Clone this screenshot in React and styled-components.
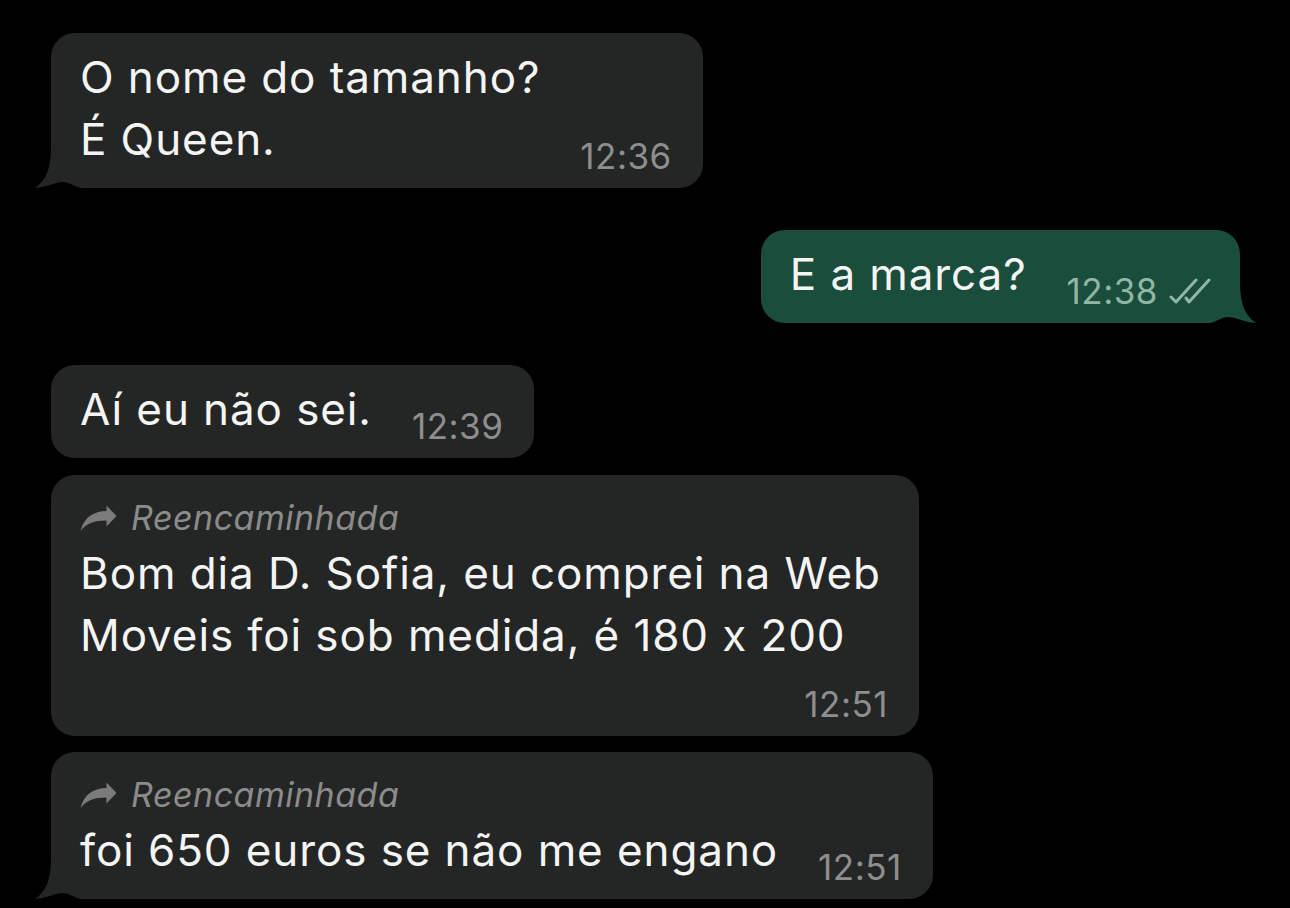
import React from 'react'
import styled, { createGlobalStyle } from 'styled-components'

const GlobalStyle = createGlobalStyle`
    html, body {
        margin: 0;
        padding: 0;
        background: #000;
    }
    body {
        font-family: Inter, "Noto Sans", "Liberation Sans", sans-serif;
        font-feature-settings: "calt" 0;
        -webkit-font-smoothing: antialiased;
    }
`

const Page = styled.div`
    width: 1290px;
    height: 908px;
    box-sizing: border-box;
    padding: 33px 50px 0 51px;
    display: flex;
    flex-direction: column;
    overflow: hidden;
`

const Bubble = styled.div`
    position: relative;
    align-self: ${props => (props.$out ? 'flex-end' : 'flex-start')};
    margin-top: ${props => props.$gap || 0}px;
    background: ${props => (props.$out ? '#1b4d3c' : '#242625')};
    border-radius: 24px;
    ${props => props.$tail && (props.$out ? 'border-bottom-right-radius: 0;' : 'border-bottom-left-radius: 0;')}
    padding: 13px ${props => (props.$out ? 28 : 31)}px 18px 29px;
    box-sizing: border-box;
    ${props => props.$width && `width: ${props.$width}px;`}
`

const Row = styled.div`
    display: flex;
    align-items: flex-end;
    gap: 40px;
`

const Text = styled.div`
    font-size: 44px;
    line-height: 62px;
    letter-spacing: 0.9px;
    color: #f4f4f4;
    white-space: pre-line;
`

const Time = styled.span`
    display: flex;
    align-items: center;
    gap: 10px;
    font-size: 35px;
    line-height: 28px;
    letter-spacing: 0.5px;
    color: ${props => (props.$out ? '#8fb6a6' : '#8e8e90')};
    white-space: nowrap;
`

const TimeRow = styled.div`
    display: flex;
    justify-content: flex-end;
    margin-top: 24px;
`

const Forwarded = styled.div`
    display: flex;
    align-items: center;
    gap: 14px;
    height: 54px;
    padding-top: 4px;
    box-sizing: border-box;
    font-size: 34px;
    letter-spacing: 0.5px;
    font-style: italic;
    color: #8b8b8c;

    svg {
        display: block;
        margin-top: 2px;
    }
`

const TailSvg = styled.svg`
    position: absolute;
    bottom: 0;
    width: 50px;
    height: 40px;
    ${props => (props.$out ? 'right: -18px; transform: scaleX(-1);' : 'left: -18px;')}
`

const Tail = ({ out }) => (
    <TailSvg $out={out} viewBox="0 0 50 40">
        <path
            d="M18 0 C18 20 13 33 2 40 C12 40 20 35 29 34 C37 34 42 39 48 40 L48 0 Z"
            fill={out ? '#1b4d3c' : '#242625'}
        />
        <path d="M2 40 C12 40 20 35 29 34 C37 34 42 39 48 40 Z" fill="#000" />
    </TailSvg>
)

const ForwardIcon = () => (
    <svg width="37" height="27" viewBox="0 0 37 27">
        <path d="M36.5 11 L26.5 0.5 L26.5 6 C14 6 4 12 0.5 26 C6 18.5 14 15.5 26.5 15.5 L26.5 21.5 Z" fill="#7b7b7c" />
    </svg>
)

const DoubleCheck = () => (
    <svg width="44" height="26" viewBox="0 0 44 26">
        <g fill="none" stroke="#8fb6a6" strokeWidth="3" strokeLinecap="round" strokeLinejoin="round">
            <path d="M3 19 L8 24 L28 2" />
            <path d="M18 20 L21 24 L41 2" />
        </g>
    </svg>
)

const App = () => (
    <>
        <GlobalStyle />
        <Page>
            <Bubble $tail>
                <Row>
                    <Text>{'O nome do tamanho?\nÉ Queen.'}</Text>
                    <Time>12:36</Time>
                </Row>
                <Tail />
            </Bubble>

            <Bubble $out $tail $gap={42}>
                <Row>
                    <Text>E a marca?</Text>
                    <Time $out>
                        12:38
                        <DoubleCheck />
                    </Time>
                </Row>
                <Tail out />
            </Bubble>

            <Bubble $gap={42}>
                <Row>
                    <Text>Aí eu não sei.</Text>
                    <Time>12:39</Time>
                </Row>
            </Bubble>

            <Bubble $gap={17} $width={868}>
                <Forwarded>
                    <ForwardIcon />
                    Reencaminhada
                </Forwarded>
                <Text>{'Bom dia D. Sofia, eu comprei na Web\nMoveis foi sob medida, é 180 x 200'}</Text>
                <TimeRow>
                    <Time>12:51</Time>
                </TimeRow>
            </Bubble>

            <Bubble $tail $gap={16}>
                <Forwarded>
                    <ForwardIcon />
                    Reencaminhada
                </Forwarded>
                <Row>
                    <Text>foi 650 euros se não me engano</Text>
                    <Time>12:51</Time>
                </Row>
                <Tail />
            </Bubble>
        </Page>
    </>
)

export default App
